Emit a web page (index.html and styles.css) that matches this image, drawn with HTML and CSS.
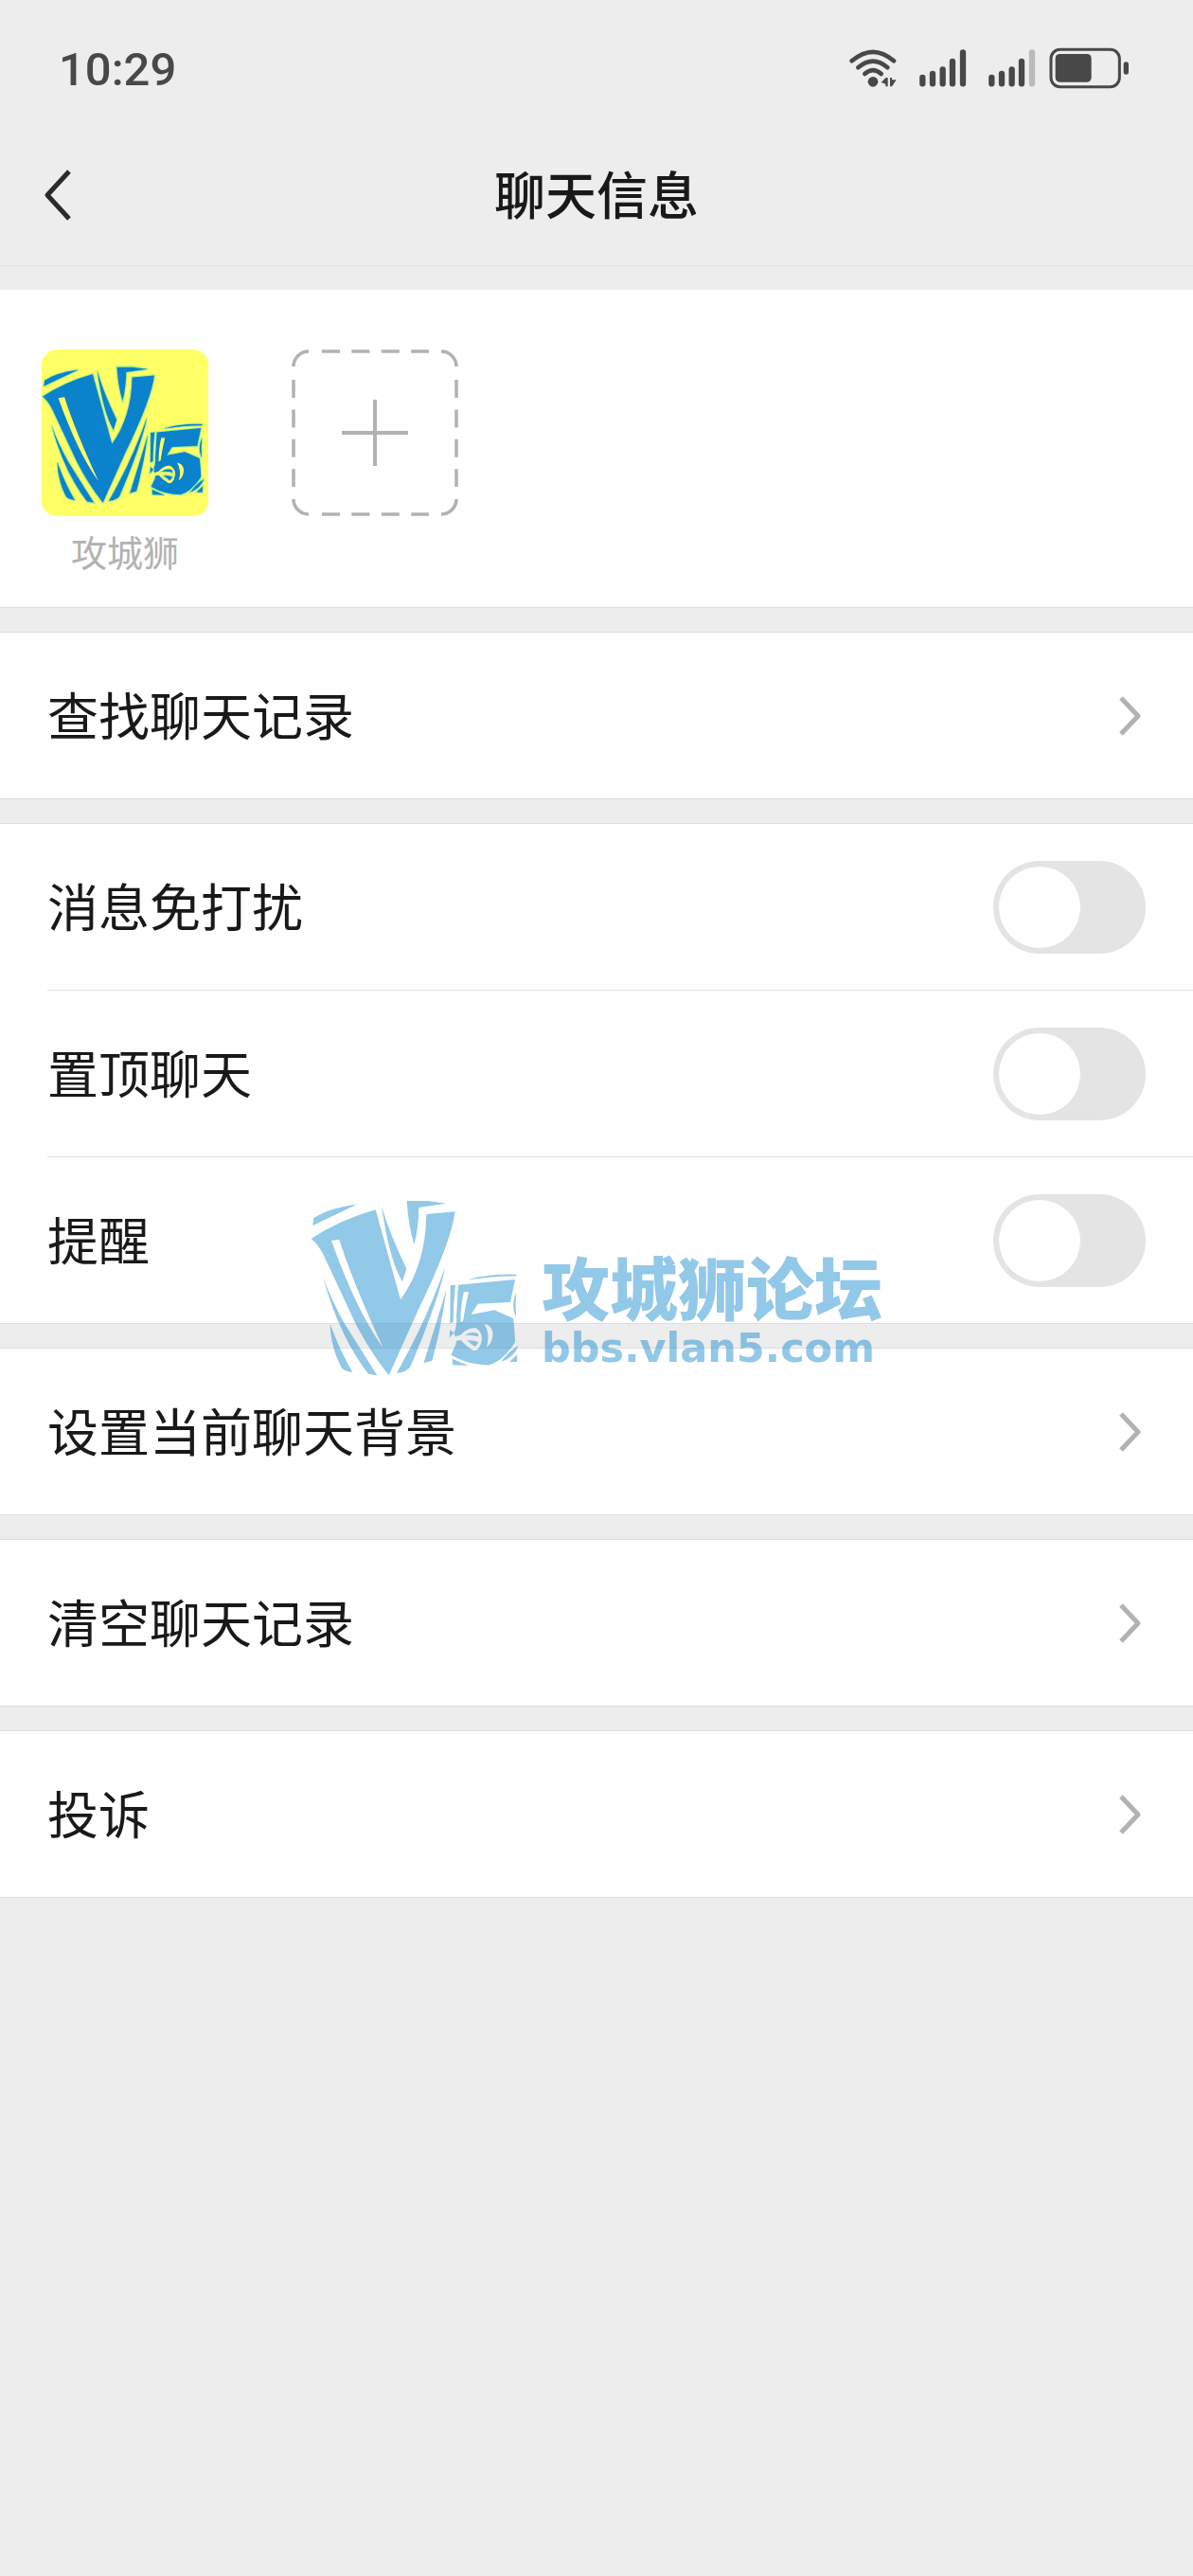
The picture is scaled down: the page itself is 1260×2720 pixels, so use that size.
FILE: index.html
```html
<!DOCTYPE html>
<html lang="zh-CN">
<head>
    <meta charset="UTF-8">
    <meta name="viewport" content="width=device-width, initial-scale=1">
    <title>聊天信息</title>
    <link rel="stylesheet" href="styles.css">
</head>
<body>

<svg class="defs" aria-hidden="true">
    <mask id="cuts" maskUnits="userSpaceOnUse" x="0" y="0" width="780" height="690">
        <rect width="780" height="690" fill="#fff" stroke="none"/>
        <g fill="#000" stroke="none">
            <path d="M126 208 L151 204 Q190 330 290 548 Q205 430 126 208Z"/>
            <path d="M546 370 L561 371 Q550 415 543 464 L535 466 Q536 410 546 370Z"/>
            <path d="M498 524 Q515 510 535 507 Q560 481 584 485 Q607 500 602 526 Q596 556 577 556 Q552 543 537 524 Q518 522 506 540 L500 538 Q506 528 515 523Z"/>
            <path d="M610 472 Q636 476 638 504 Q636 532 618 545 Q630 500 610 472Z"/>
        </g>
    </mask>
    <symbol id="logo-shape" viewBox="0 0 780 690" overflow="visible">
        <g mask="url(#cuts)">
            <path d="M62 202 Q150 143 266 110 L345 395 Q425 285 427 124 L518 116 Q505 215 400 430 L308 635 Q245 555 200 465 L108 268 Q88 222 62 202Z"/>
            <path d="M528 348 L708 331 L693 403 L590 408 L569 442 L642 428 L702 454 Q707 490 708 530 Q670 590 625 602 Q560 602 505 570 L516 546 Q528 532 514 500 Q525 480 522 450Z"/>
        </g>
        <path d="M67 160 L70 137 Q120 103 207 93Z"/>
        <path d="M285 99 Q310 185 364 297 L351 338 Q310 270 285 99Z"/>
        <path d="M365 82 L430 82 L490 90 L403 103 Q402 170 388 220 Q370 160 365 82Z"/>
        <path d="M99 322 Q125 395 168 471 L271 635 L243 630 Q150 510 99 322Z"/>
        <path d="M122 471 Q150 550 193 625 Q160 620 155 605 Q123 540 122 471Z"/>
        <path d="M487 290 Q465 400 375 610 Q355 628 333 627 Q430 455 487 290Z"/>
        <path d="M491 360 Q475 480 445 588 L418 596 Q455 480 491 360Z"/>
        <path d="M557 333 Q620 312 713 315 L712 320 Q640 320 557 333Z"/>
        <path d="M503 350 L519 348 Q512 410 512 466 L502 470Z"/>
        <path d="M502 490 L514 500 L500 516Z"/>
        <path d="M712 371 Q708 410 711 451 Q693 415 712 371Z"/>
        <path d="M719 540 Q705 578 664 592 Q690 556 719 540Z"/>
        <path d="M715 568 L714 592 L690 592Z"/>
        <path d="M509 582 L560 604 L510 602Z"/>
        <path d="M548 508 Q568 493 590 502 L592 512 Q570 506 548 508Z"/>
        <path d="M556 524 Q576 522 592 530 L582 544 Q568 536 556 524Z"/>
    </symbol>
    <symbol id="arrow" viewBox="0 0 28 44">
        <path d="M2 3 L20 22 L2 41" fill="none" stroke="#b2b2b2" stroke-width="5" stroke-linejoin="round"/>
    </symbol>
</svg>

<div class="status-bar">
    <span class="time">10:29</span>
    <div class="status-icons">
        <svg width="60" height="44" viewBox="110 60 180 132">
            <g fill="none" stroke="#484848" stroke-width="14" stroke-linecap="round">
                <path d="M121 103 Q188 46 254 103"/>
                <path d="M141 124 Q188 84 234 124"/>
                <path d="M162 144 Q188 121 214 144"/>
            </g>
            <circle cx="188" cy="169" r="16" fill="#484848"/>
            <path d="M214 171 L229 156 H235 V184 H228 V176Z M242 156 H248 V163 L262 163 L248 184 H242Z" fill="#484848"/>
        </svg>
        <svg width="59" height="44" viewBox="330 60 177 132">
            <path d="M343 156 V175 M375 144 V175 M407 130 V175 M438 105 V175 M471 76 V175" stroke="#484848" stroke-width="19" stroke-linecap="round"/>
        </svg>
        <svg width="51" height="44" viewBox="549 60 153 132">
            <path d="M562 156 V175 M594 144 V175 M626 130 V175 M657 105 V175" stroke="#484848" stroke-width="19" stroke-linecap="round"/>
            <path d="M690 76 V175" stroke="#bbb" stroke-width="19" stroke-linecap="round"/>
        </svg>
        <svg width="85" height="44" viewBox="745 60 255 132">
            <rect x="751" y="67" width="217" height="118" rx="29" fill="none" stroke="#484848" stroke-width="9"/>
            <rect x="765" y="81" width="114" height="89" rx="14" fill="#484848"/>
            <rect x="981" y="106" width="16" height="40" rx="8" fill="#484848"/>
        </svg>
    </div>
</div>

<header class="nav">
    <button class="back" aria-label="返回">
        <svg width="34" height="58" viewBox="0 0 34 58">
            <path d="M29 4 L6 29 L29 54" fill="none" stroke="#2b2b2b" stroke-width="5" stroke-linejoin="round"/>
        </svg>
    </button>
    <h1>聊天信息</h1>
</header>

<main>
    <section class="members">
        <a class="member" href="#">
            <svg class="avatar" viewBox="58 10 680 680">
                <use href="#logo-shape" x="0" y="0" width="780" height="690"/>
            </svg>
            <span>攻城狮</span>
        </a>
        <button class="add" aria-label="添加成员">
            <svg width="176" height="176" viewBox="0 0 176 176" fill="none" stroke="#b2b2b2">
                <path d="M2 18 A16 16 0 0 1 18 2 M158 2 A16 16 0 0 1 174 18 M174 158 A16 16 0 0 1 158 174 M18 174 A16 16 0 0 1 2 158" stroke-width="3.5"/>
                <path d="M32 2 H145 M32 174 H145 M2 32 V145 M174 32 V145" stroke-width="3.5" stroke-dasharray="19 12.4"/>
                <path d="M53 88 H123 M88 53 V123" stroke-width="4"/>
            </svg>
        </button>
    </section>

    <section class="group">
        <a class="row" href="#"><span>查找聊天记录</span><svg class="arrow"><use href="#arrow"/></svg></a>
    </section>

    <section class="group">
        <div class="row">
            <label for="mute">消息免打扰</label>
            <input type="checkbox" class="switch" id="mute">
        </div>
        <div class="row">
            <label for="pin">置顶聊天</label>
            <input type="checkbox" class="switch" id="pin">
        </div>
        <div class="row">
            <label for="remind">提醒</label>
            <input type="checkbox" class="switch" id="remind">
        </div>
    </section>

    <section class="group">
        <a class="row" href="#"><span>设置当前聊天背景</span><svg class="arrow"><use href="#arrow"/></svg></a>
    </section>

    <section class="group">
        <a class="row" href="#"><span>清空聊天记录</span><svg class="arrow"><use href="#arrow"/></svg></a>
    </section>

    <section class="group">
        <a class="row" href="#"><span>投诉</span><svg class="arrow"><use href="#arrow"/></svg></a>
    </section>
</main>

<div class="watermark">
    <svg width="220" height="188" viewBox="60 76 660 564">
        <use href="#logo-shape" x="0" y="0" width="780" height="690"/>
    </svg>
    <div class="watermark-text">
        <strong>攻城狮论坛</strong>
        <span>bbs.vlan5.com</span>
    </div>
</div>

</body>
</html>
```
FILE: styles.css
```css
* { box-sizing: border-box; }
body { margin: 0; min-height: 100vh; background: #ededed; color: #191919; font-family: "Noto Sans CJK SC", sans-serif; }
svg { display: block; flex: none; }
a { color: inherit; text-decoration: none; }
button { background: none; border: none; padding: 0; cursor: pointer; }
.defs { position: absolute; width: 0; height: 0; }

.status-bar { display: flex; justify-content: space-between; align-items: center; height: 132px; padding: 12px 67px 0 62px; }
.time { padding-top: 2px; font: 500 49px Roboto, sans-serif; color: #484848; }
.status-icons { display: flex; align-items: center; gap: 14px; }

.nav { display: grid; grid-template-columns: 120px 1fr 120px; align-items: center; height: 149px; border-bottom: 1px solid #e2e2e2; }
.nav h1 { margin: 0; padding-bottom: 4px; font-size: 54px; line-height: 80px; font-weight: 500; text-align: center; }
.back { justify-self: start; padding: 0 44px; }

.members { display: flex; align-items: flex-start; gap: 88px; margin-top: 25px; padding: 63px 44px 34px; background: #fff; border-bottom: 1px solid #dedede; }
.member { display: flex; flex-direction: column; gap: 12px; width: 176px; text-align: center; font-size: 38px; line-height: 50px; color: #b2b2b2; }
.avatar { width: 176px; height: 176px; border-radius: 16px; background: #ffff66; fill: #0a82cc; stroke: #a5ee96; stroke-width: 8px; paint-order: stroke; }

.group { margin-top: 25px; background: #fff; border-top: 1px solid #dedede; border-bottom: 1px solid #dedede; }
.row { display: flex; justify-content: space-between; align-items: center; height: 175px; margin-left: 50px; padding-right: 50px; font-size: 54px; line-height: 80px; }
.row + .row { height: 176px; border-top: 1px solid #e0e0e0; }
.row span, .row label { padding-bottom: 4px; }
.arrow { width: 28px; height: 44px; }

.switch { appearance: none; width: 161px; height: 98px; margin: 0; padding: 6px; border-radius: 49px; background: #e4e4e4; cursor: pointer; }
.switch::before { content: ""; display: block; width: 86px; height: 86px; border-radius: 50%; background: #fff; }
.switch:checked { background: #07c160; }
.switch:checked::before { margin-left: auto; }

.watermark { position: fixed; inset: 0; display: flex; justify-content: center; align-items: center; gap: 24px; color: #0f85cc; fill: #0f85cc; opacity: .45; pointer-events: none; }
.watermark-text { display: flex; flex-direction: column; padding-top: 44px; }
.watermark-text strong { font-size: 72px; line-height: 82px; font-weight: 900; }
.watermark-text span { font: bold 43px/50px "DejaVu Sans", sans-serif; }
```
